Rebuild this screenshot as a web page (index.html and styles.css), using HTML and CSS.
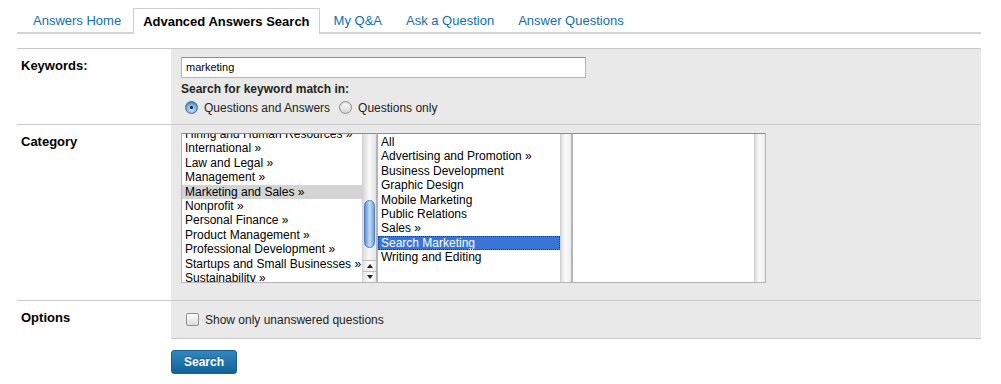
FILE: index.html
```html
<!DOCTYPE html>
<html lang="en">
<head>
<meta charset="UTF-8">
<title>Advanced Answers Search</title>
<link rel="stylesheet" href="styles.css">
</head>
<body>
<div class="page">
  <ul class="tabs">
    <li class="tab"><a href="#">Answers Home</a></li>
    <li class="tab tab-active">Advanced Answers Search</li>
    <li class="tab"><a href="#">My Q&amp;A</a></li>
    <li class="tab"><a href="#">Ask a Question</a></li>
    <li class="tab"><a href="#">Answer Questions</a></li>
  </ul>

  <form class="search-form">
    <div class="row">
      <div class="label">Keywords:</div>
      <div class="field">
        <div class="text-input">marketing</div>
        <div class="sub-label">Search for keyword match in:</div>
        <div class="radios">
          <span class="radio radio-on"></span><span class="radio-text">Questions and Answers</span>
          <span class="radio"></span><span class="radio-text">Questions only</span>
        </div>
      </div>
    </div>

    <div class="row">
      <div class="label">Category</div>
      <div class="field field-lists">
        <div class="lists">
          <div class="listbox listbox-first">
            <div class="options">
              <ul class="option-list scrolled">
                <li>Hiring and Human Resources »</li>
                <li>International »</li>
                <li>Law and Legal »</li>
                <li>Management »</li>
                <li class="picked">Marketing and Sales »</li>
                <li>Nonprofit »</li>
                <li>Personal Finance »</li>
                <li>Product Management »</li>
                <li>Professional Development »</li>
                <li>Startups and Small Businesses »</li>
                <li>Sustainability »</li>
              </ul>
            </div>
            <div class="scrollbar">
              <div class="track-top"></div>
              <div class="thumb"></div>
              <div class="track-rest"></div>
              <div class="arrow arrow-up"></div>
              <div class="arrow arrow-down"></div>
            </div>
          </div>
          <div class="listbox">
            <div class="options">
              <ul class="option-list">
                <li>All</li>
                <li>Advertising and Promotion »</li>
                <li>Business Development</li>
                <li>Graphic Design</li>
                <li>Mobile Marketing</li>
                <li>Public Relations</li>
                <li>Sales »</li>
                <li class="selected">Search Marketing</li>
                <li>Writing and Editing</li>
              </ul>
            </div>
            <div class="track-empty"></div>
          </div>
          <div class="listbox listbox-last">
            <div class="options"></div>
            <div class="track-empty"></div>
          </div>
        </div>
      </div>
    </div>

    <div class="row row-last">
      <div class="label">Options</div>
      <div class="field field-options">
        <label class="check-line"><span class="checkbox"></span>Show only unanswered questions</label>
      </div>
    </div>
  </form>

  <button class="btn-search" type="button">Search</button>
</div>
</body>
</html>
```

FILE: styles.css
```css
body {
  margin: 0;
  background: #fff;
  font-family: "Liberation Sans", Arial, sans-serif;
  color: #000;
}
.page {
  width: 964px;
  margin-left: 17px;
  padding-top: 8px;
}

/* tabs */
.tabs {
  display: flex;
  align-items: flex-end;
  list-style: none;
  margin: 0;
  padding: 0 0 0 4px;
  border-bottom: 2px solid #d4d4d4;
  font-size: 13px;
}
.tab {
  padding: 2px 12px 0;
  line-height: 22px;
}
.tab a {
  color: #0e6fb0;
  text-decoration: none;
}
.tab-active {
  padding: 2px 9px 2px;
  margin-bottom: -2px;
  line-height: 21px;
  background: #fff;
  border: 1px solid #cfcfcf;
  border-bottom: 0;
  font-weight: bold;
  margin-right: 2px;
}

/* form rows */
.search-form {
  margin-top: 14px;
  border-top: 1px solid #c8c8c8;
}
.row {
  display: flex;
  border-bottom: 1px solid #c8c8c8;
}
.row-last {
  border-bottom: 0;
}
.row-last .field {
  border-bottom: 1px solid #c8c8c8;
}
.label {
  width: 150px;
  padding: 9px 0 0 4px;
  font-size: 13px;
  font-weight: bold;
  line-height: 15px;
}
.field {
  flex: 1;
  background: #e9e9e9;
  padding: 8px 10px 9px;
  font-size: 12px;
}
.field-lists {
  padding-bottom: 17px;
}
.field-options {
  padding-top: 11px;
  padding-bottom: 11px;
}

.text-input {
  width: 399px;
  height: 19px;
  line-height: 19px;
  padding-left: 4px;
  background: #fff;
  border: 1px solid #b5b5b5;
  border-top-color: #8e8e8e;
  font-size: 11px;
}
.sub-label {
  margin-top: 4px;
  line-height: 14px;
  font-weight: bold;
  color: #222;
}
.radios {
  display: flex;
  align-items: center;
  margin-top: 4px;
  height: 15px;
  padding-left: 4px;
}
.radio {
  width: 11px;
  height: 11px;
  border-radius: 50%;
  border: 1px solid #8a8a8a;
  background: linear-gradient(#fdfdfd, #d6d6d6);
  box-shadow: inset 0 1px 1px rgba(0,0,0,0.15);
  margin-right: 6px;
  position: relative;
}
.radio-on {
  border-color: #4a6e9c;
  background: radial-gradient(circle at 50% 70%, #cfe6fb, #6ea6de 60%, #3f79c0);
}
.radio-on::after {
  content: "";
  position: absolute;
  left: 4px;
  top: 4px;
  width: 3px;
  height: 3px;
  border-radius: 50%;
  background: #111;
}
.radio-text {
  margin-right: 9px;
  color: #222;
}

/* list boxes */
.lists {
  display: flex;
  height: 150px;
}
.listbox {
  display: flex;
  width: 193px;
  background: #fff;
  border: 1px solid #b4b4b4;
  border-top-color: #8c8c8c;
}
.listbox-first {
  width: 194px;
}
.listbox-last {
  width: 192px;
}
.options {
  flex: 1;
  overflow: hidden;
}
.option-list {
  list-style: none;
  margin: 0;
  padding: 1px 0 0;
  line-height: 14.4px;
  font-size: 12px;
  white-space: nowrap;
}
.option-list li {
  padding-left: 3px;
}
.option-list.scrolled {
  margin-top: -8px;
}
.option-list .picked {
  background: #d4d4d4;
}
.option-list .selected {
  background: #3875d7;
  color: #fff;
  outline: 1px dotted #1b3f7a;
  outline-offset: -1px;
}

/* fake aqua scrollbar */
.scrollbar {
  width: 13px;
  display: flex;
  flex-direction: column;
  background: linear-gradient(90deg, #dcdcdc, #f7f7f7 45%, #e6e6e6);
  border-left: 1px solid #d2d2d2;
}
.track-top {
  height: 66px;
  border-radius: 6px 6px 0 0;
  background: linear-gradient(90deg, #d8d8d8, #fafafa 50%, #e2e2e2);
}
.thumb {
  height: 46px;
  margin: 0 1px;
  border-radius: 6px;
  border: 1px solid #4f7fc0;
  background: linear-gradient(90deg, #5b93d6, #c4dcf7 50%, #6ea3e0);
}
.track-rest {
  flex: 1;
}
.arrow {
  height: 10px;
  position: relative;
  border-top: 1px solid #bdbdbd;
  background: linear-gradient(90deg, #e4e4e4, #ffffff 50%, #e8e8e8);
}
.arrow::after {
  content: "";
  position: absolute;
  left: 4px;
  top: 3px;
  border-left: 3px solid transparent;
  border-right: 3px solid transparent;
}
.arrow-up::after {
  border-bottom: 4px solid #222;
}
.arrow-down::after {
  border-top: 4px solid #222;
}
.track-empty {
  width: 10px;
  border-left: 1px solid #cfcfcf;
  background: linear-gradient(90deg, #dedede, #fbfbfb 45%, #ececec);
}

/* options row */
.check-line {
  display: flex;
  align-items: center;
  height: 15px;
  padding-left: 5px;
  color: #222;
}
.checkbox {
  width: 11px;
  height: 11px;
  border: 1px solid #8f8f8f;
  border-radius: 2px;
  background: linear-gradient(#fefefe, #dcdcdc);
  margin-right: 6px;
}

/* button */
.btn-search {
  display: block;
  margin: 11px 0 0 154px;
  width: 66px;
  height: 24px;
  border: 1px solid #155f8c;
  border-radius: 3px;
  background: linear-gradient(#3386bf, #0f6399);
  color: #fff;
  font-family: "Liberation Sans", Arial, sans-serif;
  font-size: 12px;
  font-weight: bold;
  text-shadow: 0 -1px 0 rgba(0,0,0,0.3);
  padding: 0;
}
```
